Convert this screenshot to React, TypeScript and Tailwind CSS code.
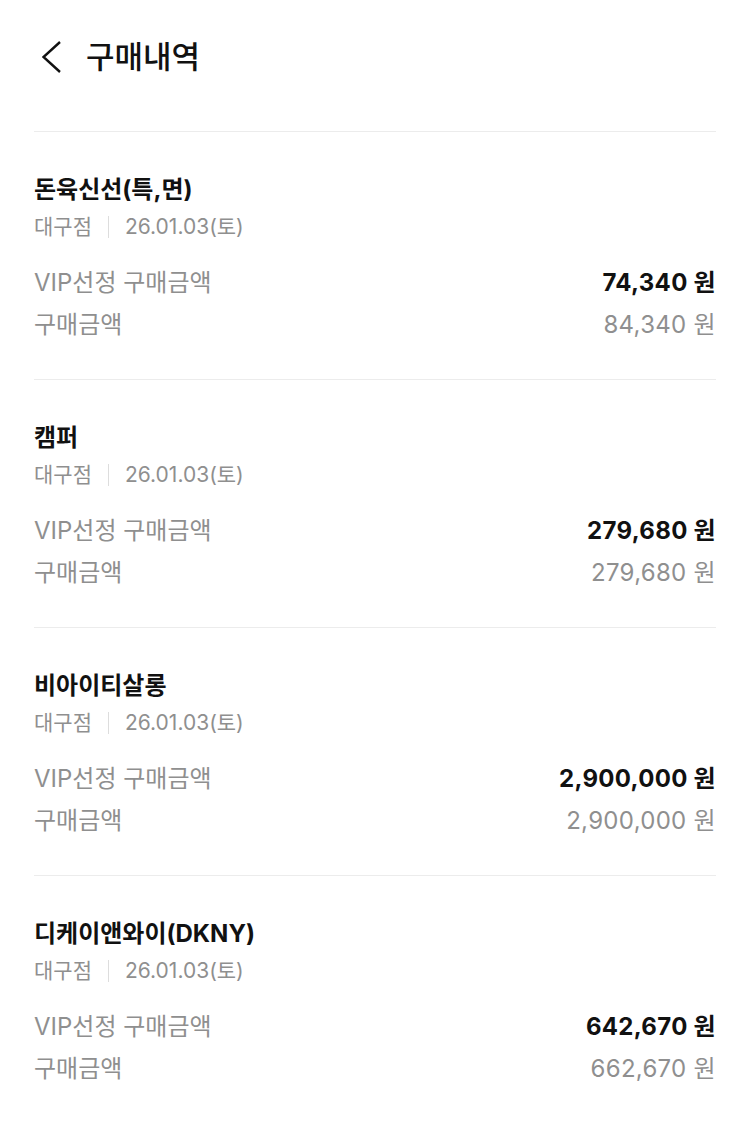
interface Purchase {
  store: string
  branch: string
  date: string
  vipAmount: string
  amount: string
}

const purchases: Purchase[] = [
  { store: '돈육신선(특,면)', branch: '대구점', date: '26.01.03(토)', vipAmount: '74,340', amount: '84,340' },
  { store: '캠퍼', branch: '대구점', date: '26.01.03(토)', vipAmount: '279,680', amount: '279,680' },
  { store: '비아이티살롱', branch: '대구점', date: '26.01.03(토)', vipAmount: '2,900,000', amount: '2,900,000' },
  { store: '디케이앤와이(DKNY)', branch: '대구점', date: '26.01.03(토)', vipAmount: '642,670', amount: '662,670' },
]

export default function App() {
  return (
    <div
      className="min-h-[1121px] w-[750px] bg-white px-[34px] text-[#111111]"
      style={{ fontFamily: 'Inter, "Noto Sans CJK KR", sans-serif' }}
    >
      {/* Header */}
      <div className="flex h-[114px] items-center">
        <button className="flex h-[40px] w-[40px] items-center justify-start pl-[8px]">
          <svg width="20" height="32" viewBox="0 0 20 32" fill="none">
            <polyline
              points="18,1 1.5,16 18,31"
              stroke="#111111"
              strokeWidth="2.4"
              strokeLinejoin="miter"
            />
          </svg>
        </button>
        <h1 className="ml-[12px] text-[31px] font-medium">구매내역</h1>
      </div>

      <div className="mt-[17px]">
        {purchases.map((p, idx) => (
          <div key={idx} className="border-t border-[#ececec] pt-[42px] pb-[36px]">
            <h2 className="text-[24px] leading-[32px] font-bold">{p.store}</h2>
            <div className="mt-[7px] flex items-center text-[21px] leading-[28px] text-[#8f8f8f]">
              <span>{p.branch}</span>
              <span className="mx-[16px] h-[22px] w-px bg-[#dddddd]" />
              <span>{p.date}</span>
            </div>

            <div className="mt-[24px] flex items-center justify-between text-[24px] leading-[36px]">
              <span className="text-[#8f8f8f]">VIP선정 구매금액</span>
              <span className="font-bold tracking-[0.3px] text-[#111111]">{p.vipAmount} 원</span>
            </div>
            <div className="mt-[6px] flex items-center justify-between text-[24px] leading-[36px] text-[#8f8f8f]">
              <span>구매금액</span>
              <span className="tracking-[0.3px]">{p.amount} 원</span>
            </div>
          </div>
        ))}
      </div>
    </div>
  )
}
